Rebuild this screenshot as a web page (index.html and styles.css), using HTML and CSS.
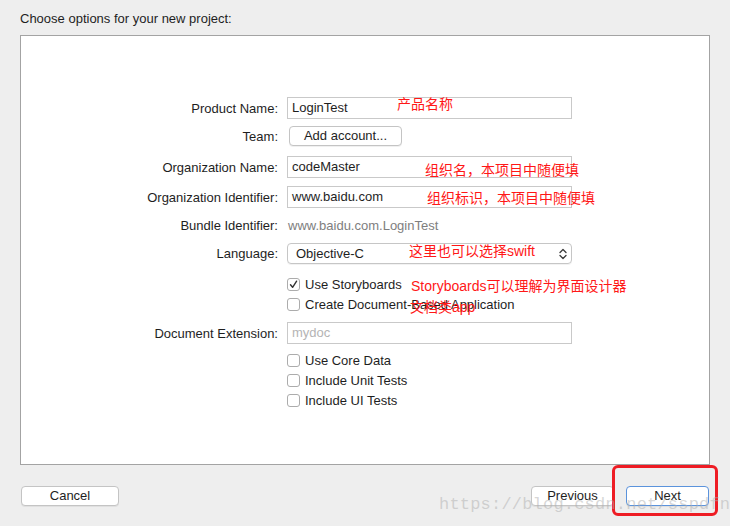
FILE: index.html
```html
<!DOCTYPE html>
<html lang="zh-CN">
<head>
<meta charset="utf-8">
<title>Choose options for your new project</title>
<link rel="stylesheet" href="styles.css">
</head>
<body>
<div class="window">
  <div class="title">Choose options for your new project:</div>
  <div class="panel">
    <div class="form">
      <div class="row r-product">
        <div class="label">Product Name:</div>
        <div class="field">LoginTest</div>
      </div>
      <div class="row r-team">
        <div class="label">Team:</div>
        <div class="btn team-btn">Add account...</div>
      </div>
      <div class="row r-orgname">
        <div class="label">Organization Name:</div>
        <div class="field">codeMaster</div>
      </div>
      <div class="row r-orgid">
        <div class="label">Organization Identifier:</div>
        <div class="field">www.baidu.com</div>
      </div>
      <div class="row r-bundle">
        <div class="label">Bundle Identifier:</div>
        <div class="static">www.baidu.com.LoginTest</div>
      </div>
      <div class="row r-lang">
        <div class="label">Language:</div>
        <div class="popup">
          <span>Objective-C</span>
          <svg class="updown" width="8" height="12" viewBox="0 0 8 12"><path d="M1 4.5 L4 1.5 L7 4.5 M1 7.5 L4 10.5 L7 7.5" fill="none" stroke="#3a3a3a" stroke-width="1.3" stroke-linecap="round" stroke-linejoin="round"/></svg>
        </div>
      </div>
      <div class="row r-check r-first">
        <div class="label"></div>
        <div class="check"><span class="box checked"><svg width="11" height="11" viewBox="0 0 11 11"><path d="M2.5 5.8 L4.6 8.3 L8.6 2.2" fill="none" stroke="#333" stroke-width="1.4" stroke-linecap="round" stroke-linejoin="round"/></svg></span><span>Use Storyboards</span></div>
      </div>
      <div class="row r-check">
        <div class="label"></div>
        <div class="check"><span class="box"></span><span>Create Document-Based Application</span></div>
      </div>
      <div class="row r-docext">
        <div class="label">Document Extension:</div>
        <div class="field placeholder">mydoc</div>
      </div>
      <div class="row r-check r-first2">
        <div class="label"></div>
        <div class="check"><span class="box"></span><span>Use Core Data</span></div>
      </div>
      <div class="row r-check">
        <div class="label"></div>
        <div class="check"><span class="box"></span><span>Include Unit Tests</span></div>
      </div>
      <div class="row r-check">
        <div class="label"></div>
        <div class="check"><span class="box"></span><span>Include UI Tests</span></div>
      </div>
    </div>
  </div>
  <div class="footer">
    <div class="btn cancel">Cancel</div>
    <div class="right-btns">
      <div class="btn nav">Previous</div>
      <div class="btn nav next">Next</div>
    </div>
  </div>

  <div class="note n1">产品名称</div>
  <div class="note n2">组织名，本项目中随便填</div>
  <div class="note n3">组织标识，本项目中随便填</div>
  <div class="note n4">这里也可以选择swift</div>
  <div class="note n5">Storyboards可以理解为界面设计器</div>
  <div class="note n6">文档类app</div>

  <div class="redbox"></div>
  <div class="watermark">https://blog.csdn.net/sspdfn</div>
</div>
</body>
</html>
```

FILE: styles.css
```css
html, body {
  margin: 0;
  padding: 0;
}
body {
  background: #eeeeee;
  font-family: "Liberation Sans", Arial, sans-serif;
  font-size: 13px;
  color: #1e1e1e;
}
.window {
  position: relative;
  width: 730px;
  height: 526px;
  overflow: hidden;
}
.title {
  padding: 11px 0 0 20px;
  height: 24px;
  line-height: 16px;
}
.panel {
  margin: 0 20px;
  height: 428px;
  background: #ffffff;
  border: 1px solid #a3a3a3;
}
.form {
  padding-top: 61px;
  display: flex;
  flex-direction: column;
}
.row {
  display: flex;
  align-items: center;
  column-gap: 9px;
  height: 22px;
}
.label {
  width: 257px;
  flex: none;
  text-align: right;
}
.field {
  box-sizing: border-box;
  width: 285px;
  height: 22px;
  border: 1px solid #c9c9c9;
  padding: 0 4px;
  line-height: 20px;
  background: #fff;
}
.field.placeholder {
  color: #b4b4b4;
}
.static {
  color: #7e7e7e;
  padding-left: 1px;
}
.r-team { margin-top: 7px; height: 20px; }
.r-orgname { margin-top: 10px; }
.r-orgid { margin-top: 8px; }
.r-bundle { margin-top: 8px; height: 18px; }
.r-lang { margin-top: 9px; height: 21px; }
.r-check { height: 20px; }
.r-first { margin-top: 10px; }
.r-docext { margin-top: 8px; }
.r-first2 { margin-top: 6px; }

.btn {
  box-sizing: border-box;
  height: 20px;
  line-height: 18px;
  text-align: center;
  background: #ffffff;
  border: 1px solid #c4c4c4;
  border-radius: 4px;
  box-shadow: 0 1px 0 rgba(0,0,0,0.06);
}
.team-btn {
  width: 113px;
  margin-left: 2px;
}
.popup {
  box-sizing: border-box;
  width: 285px;
  height: 21px;
  border: 1px solid #c6c6c6;
  border-radius: 4px;
  display: flex;
  align-items: center;
  justify-content: space-between;
  padding: 0 4px 0 8px;
  box-shadow: 0 1px 0 rgba(0,0,0,0.05);
}
.updown {
  display: block;
}
.check {
  display: flex;
  align-items: center;
  column-gap: 5px;
}
.box {
  box-sizing: border-box;
  width: 13px;
  height: 13px;
  border: 1px solid #acacac;
  border-radius: 3px;
  background: #fff;
  display: flex;
  align-items: center;
  justify-content: center;
}
.footer {
  display: flex;
  justify-content: space-between;
  padding: 21px 21px 0 21px;
}
.cancel { width: 98px; }
.right-btns {
  display: flex;
  column-gap: 12px;
}
.nav { width: 83px; }
.next {
  border-color: #5b93dc;
}

.note {
  position: absolute;
  font-family: "Liberation Sans", "Noto Sans CJK SC", sans-serif;
  font-size: 14px;
  line-height: 20px;
  color: #ff1717;
  white-space: nowrap;
}
.n1 { left: 397px; top: 94px; }
.n2 { left: 425px; top: 160px; }
.n3 { left: 427px; top: 188px; }
.n4 { left: 409px; top: 241px; }
.n5 { left: 411px; top: 276px; }
.n6 { left: 410px; top: 297px; }

.redbox {
  position: absolute;
  left: 612px;
  top: 465px;
  width: 100px;
  height: 45px;
  border: 3px solid #ee1c24;
  border-radius: 6px;
}
.watermark {
  position: absolute;
  left: 439px;
  top: 494px;
  font-family: "Liberation Mono", "DejaVu Sans Mono", monospace;
  font-size: 17px;
  letter-spacing: 0.2px;
  line-height: 22px;
  color: rgba(175,175,175,0.5);
  white-space: nowrap;
}
```
